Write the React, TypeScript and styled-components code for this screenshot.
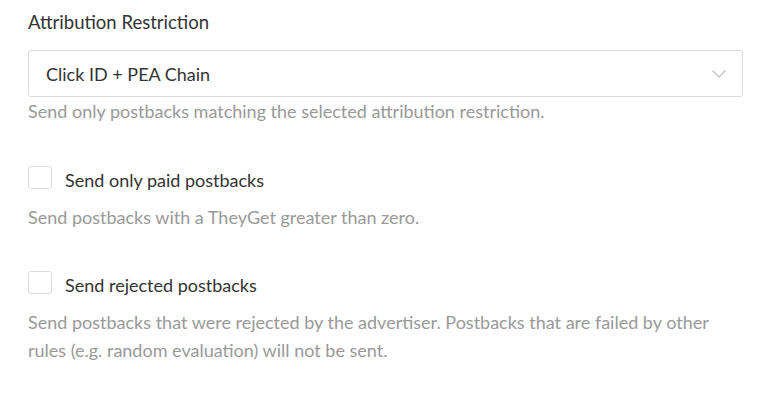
import React from "react";
import styled, { createGlobalStyle } from "styled-components";

const Global = createGlobalStyle`
  html, body { margin: 0; padding: 0; background: #ffffff; }
  body { font-family: Lato, "Open Sans", sans-serif; -webkit-font-smoothing: antialiased; }
  * { box-sizing: border-box; }
`;

const Page = styled.div`
  width: 768px;
  height: 414px;
  padding: 10px 25px 0 28px;
  display: flex;
  flex-direction: column;
`;

const Field = styled.div<{ $gap?: number }>`
  display: flex;
  flex-direction: column;
  margin-top: ${(p) => p.$gap ?? 0}px;
`;

const Label = styled.div`
  font-size: 18.5px;
  line-height: 24px;
  color: #333333;
`;

const Select = styled.div`
  margin-top: 16px;
  height: 47px;
  border: 1px solid #dcdcdc;
  border-radius: 3px;
  display: flex;
  align-items: center;
  justify-content: space-between;
  padding: 0 16px 0 17px;
  font-size: 18px;
  color: #333333;
`;

const Help = styled.div<{ $top?: number }>`
  margin-top: ${(p) => p.$top ?? 0}px;
  font-size: 18px;
  line-height: 28px;
  color: #999999;
`;

const CheckRow = styled.label`
  display: flex;
  align-items: flex-start;
  gap: 13px;
`;

const Box = styled.span`
  width: 24px;
  height: 23px;
  border: 1px solid #dcdcdc;
  border-radius: 3px;
  background: #fff;
  flex: none;
`;

const CheckText = styled.span`
  margin-top: 2px;
  font-size: 18px;
  line-height: 24px;
  color: #333333;
`;

const Chevron = () => (
  <svg width="14" height="8" viewBox="0 0 14 8" fill="none">
    <polyline points="0.5,0.5 7,7 13.5,0.5" stroke="#bdbdbd" strokeWidth="1.2" />
  </svg>
);

export default function App() {
  return (
    <>
      <Global />
      <Page>
        <Field>
          <Label>Attribution Restriction</Label>
          <Select>
            <span>Click ID + PEA Chain</span>
            <Chevron />
          </Select>
          <Help>Send only postbacks matching the selected attribution restriction.</Help>
        </Field>
        <Field $gap={41}>
          <CheckRow>
            <Box />
            <CheckText>Send only paid postbacks</CheckText>
          </CheckRow>
          <Help $top={11}>Send postbacks with a TheyGet greater than zero.</Help>
        </Field>
        <Field $gap={40}>
          <CheckRow>
            <Box />
            <CheckText>Send rejected postbacks</CheckText>
          </CheckRow>
          <Help $top={11}>
            Send postbacks that were rejected by the advertiser. Postbacks that are failed by other
            rules (e.g. random evaluation) will not be sent.
          </Help>
        </Field>
      </Page>
    </>
  );
}
